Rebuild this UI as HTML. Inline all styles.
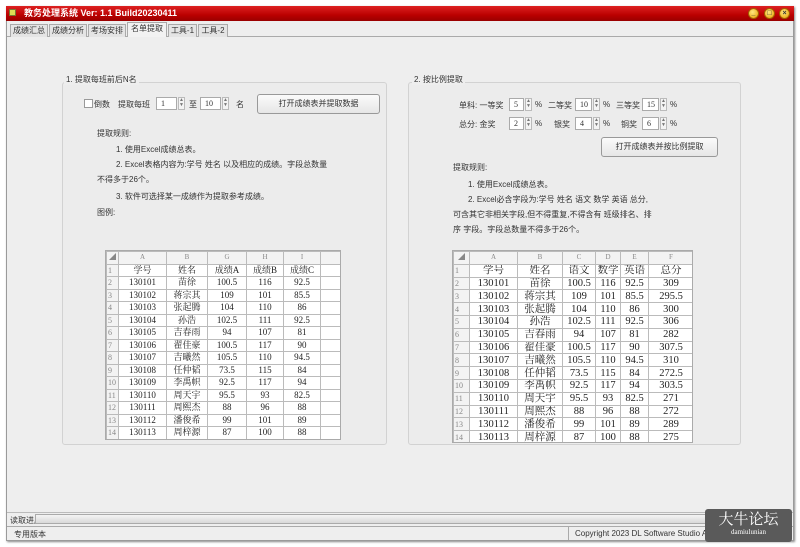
<!DOCTYPE html>
<html><head><meta charset="utf-8"><style>
*{margin:0;padding:0;box-sizing:border-box}
body{width:800px;height:547px;background:#fff;position:relative;overflow:hidden;font-family:"Liberation Sans","Noto Sans CJK SC",sans-serif;font-size:8px;color:#333}
.a{position:absolute;white-space:nowrap}
.win{left:6px;top:6px;width:788px;height:535px;background:#eeeeee;border:1px solid #9a9a9a;box-shadow:1px 1px 2px #888}
.title{left:6px;top:6px;width:788px;height:15px;background:linear-gradient(#d22 0%,#b00 60%,#900 100%);color:#fff;font-weight:bold;font-size:9px;line-height:15px;padding-left:18px}
.tb{top:8px;width:11px;height:11px;border-radius:50%;background:radial-gradient(circle at 40% 35%,#ffe680,#e8a000);border:1px solid #a06000;font-size:7px;line-height:9px;text-align:center;color:#333;font-weight:bold}
.tab{top:24px;height:13px;border:1px solid #aaa;border-bottom:none;background:#e4e4e4;font-size:8px;line-height:12px;text-align:center}
.grp{border:1px solid #d2d2d2;border-radius:3px;background:#ececec}
.inp{height:13px;background:#fff;border:1px solid #aaa;font-size:8px;line-height:11px;padding-left:4px;font-family:"Liberation Serif",serif}
.sp{width:7px;height:13px;border:1px solid #bbb;background:#f4f4f4;font-size:5px;line-height:5px;text-align:center;color:#777}
.btn{height:20px;border:1px solid #999;border-radius:3px;background:linear-gradient(#fbfbfb,#e6e6e6);text-align:center;line-height:18px;font-size:8px}
table{border-collapse:collapse;background:#fff;font-family:"Liberation Serif","Noto Serif CJK SC",serif;table-layout:fixed}
td{border:1px solid #bbb;text-align:center;padding:0;white-space:nowrap;color:#222;overflow:hidden}
.t1 td{height:12.5px;line-height:11px;font-size:9px}
.t2 td{height:12.8px;line-height:11px;font-size:10.5px}
td.h{color:#888;background:#f3f3f3;font-size:7px!important}
td.n{color:#888;background:#f3f3f3;text-align:left;font-size:8px!important;padding-left:1px}
</style></head><body>
<div class="a win"></div>
<div class="a title">教务处理系统 Ver: 1.1 Build20230411</div>
<div class="a" style="left:9px;top:9px;width:7px;height:7px;background:#dd5;border:1px solid #773"></div>
<div class="a tb" style="left:748px">_</div>
<div class="a tb" style="left:764px">□</div>
<div class="a tb" style="left:779px">×</div>
<div class="a" style="left:7px;top:36px;width:786px;height:1px;background:#aaa"></div>
<div class="a tab" style="left:10px;width:38px">成绩汇总</div>
<div class="a tab" style="left:49px;width:38px">成绩分析</div>
<div class="a tab" style="left:88px;width:38px">考场安排</div>
<div class="a tab" style="left:127px;width:40px;background:#f2f2f2;top:22px;height:15px">名单提取</div>
<div class="a tab" style="left:168px;width:29px">工具-1</div>
<div class="a tab" style="left:198px;width:30px">工具-2</div>

<div class="a grp" style="left:62px;top:82px;width:325px;height:363px"></div>
<div class="a" style="left:64px;top:74px;background:#eee;padding:0 2px">1. 提取每班前后N名</div>
<div class="a" style="left:84px;top:99px;width:9px;height:9px;border:1px solid #999;background:#fff"></div>
<div class="a" style="left:94px;top:99px">倒数</div>
<div class="a" style="left:118px;top:99px">提取每班</div>
<div class="a inp" style="left:156px;top:97px;width:21px">1</div>
<div class="a sp" style="left:178px;top:97px">▲<br>▼</div>
<div class="a" style="left:189px;top:99px">至</div>
<div class="a inp" style="left:200px;top:97px;width:21px">10</div>
<div class="a sp" style="left:222px;top:97px">▲<br>▼</div>
<div class="a" style="left:236px;top:99px">名</div>
<div class="a btn" style="left:257px;top:94px;width:123px">打开成绩表并提取数据</div>
<div class="a" style="left:97px;top:128px">提取规则:</div>
<div class="a" style="left:116px;top:144px">1. 使用Excel成绩总表。</div>
<div class="a" style="left:116px;top:159px">2. Excel表格内容为:学号 姓名 以及相应的成绩。字段总数量</div>
<div class="a" style="left:97px;top:174px">不得多于26个。</div>
<div class="a" style="left:116px;top:191px">3. 软件可选择某一成绩作为提取参考成绩。</div>
<div class="a" style="left:97px;top:207px">图例:</div>

<div class="a" style="left:105px;top:250px;width:236px;height:190px;border:1px solid #aaa;background:#f6f6f6;overflow:hidden">
<table class="t1" style="width:236px">
<colgroup><col style="width:12px"><col style="width:48px"><col style="width:41px"><col style="width:39px"><col style="width:37px"><col style="width:37px"><col></colgroup>
<tr><td class="h" style="height:10px">◢</td><td class="h" style="height:10px">A</td><td class="h">B</td><td class="h">G</td><td class="h">H</td><td class="h">I</td><td class="h"></td></tr>
<tr><td class="n">1</td><td>学号</td><td>姓名</td><td>成绩A</td><td>成绩B</td><td>成绩C</td><td></td></tr>
<tr><td class="n">2</td><td>130101</td><td>苗徐</td><td>100.5</td><td>116</td><td>92.5</td><td></td></tr>
<tr><td class="n">3</td><td>130102</td><td>蒋宗其</td><td>109</td><td>101</td><td>85.5</td><td></td></tr>
<tr><td class="n">4</td><td>130103</td><td>张起腾</td><td>104</td><td>110</td><td>86</td><td></td></tr>
<tr><td class="n">5</td><td>130104</td><td>孙浩</td><td>102.5</td><td>111</td><td>92.5</td><td></td></tr>
<tr><td class="n">6</td><td>130105</td><td>吉春雨</td><td>94</td><td>107</td><td>81</td><td></td></tr>
<tr><td class="n">7</td><td>130106</td><td>翟佳豪</td><td>100.5</td><td>117</td><td>90</td><td></td></tr>
<tr><td class="n">8</td><td>130107</td><td>吉曦然</td><td>105.5</td><td>110</td><td>94.5</td><td></td></tr>
<tr><td class="n">9</td><td>130108</td><td>任仲韬</td><td>73.5</td><td>115</td><td>84</td><td></td></tr>
<tr><td class="n">10</td><td>130109</td><td>李禹帜</td><td>92.5</td><td>117</td><td>94</td><td></td></tr>
<tr><td class="n">11</td><td>130110</td><td>周天宇</td><td>95.5</td><td>93</td><td>82.5</td><td></td></tr>
<tr><td class="n">12</td><td>130111</td><td>周熙杰</td><td>88</td><td>96</td><td>88</td><td></td></tr>
<tr><td class="n">13</td><td>130112</td><td>潘俊希</td><td>99</td><td>101</td><td>89</td><td></td></tr>
<tr><td class="n">14</td><td>130113</td><td>周梓源</td><td>87</td><td>100</td><td>88</td><td></td></tr>
</table></div>

<div class="a grp" style="left:408px;top:82px;width:333px;height:363px"></div>
<div class="a" style="left:412px;top:74px;background:#eee;padding:0 2px">2. 按比例提取</div>
<div class="a" style="left:459px;top:100px">单科: 一等奖</div>
<div class="a inp" style="left:509px;top:98px;width:15px">5</div><div class="a sp" style="left:525px;top:98px">▲<br>▼</div><div class="a" style="left:535px;top:100px">%</div>
<div class="a" style="left:548px;top:100px">二等奖</div>
<div class="a inp" style="left:575px;top:98px;width:17px">10</div><div class="a sp" style="left:593px;top:98px">▲<br>▼</div><div class="a" style="left:603px;top:100px">%</div>
<div class="a" style="left:616px;top:100px">三等奖</div>
<div class="a inp" style="left:642px;top:98px;width:17px">15</div><div class="a sp" style="left:660px;top:98px">▲<br>▼</div><div class="a" style="left:670px;top:100px">%</div>
<div class="a" style="left:459px;top:119px">总分: 金奖</div>
<div class="a inp" style="left:509px;top:117px;width:15px">2</div><div class="a sp" style="left:525px;top:117px">▲<br>▼</div><div class="a" style="left:535px;top:119px">%</div>
<div class="a" style="left:554px;top:119px">银奖</div>
<div class="a inp" style="left:575px;top:117px;width:17px">4</div><div class="a sp" style="left:593px;top:117px">▲<br>▼</div><div class="a" style="left:603px;top:119px">%</div>
<div class="a" style="left:621px;top:119px">铜奖</div>
<div class="a inp" style="left:642px;top:117px;width:17px">6</div><div class="a sp" style="left:660px;top:117px">▲<br>▼</div><div class="a" style="left:670px;top:119px">%</div>
<div class="a btn" style="left:601px;top:137px;width:117px">打开成绩表并按比例提取</div>
<div class="a" style="left:453px;top:162px">提取规则:</div>
<div class="a" style="left:468px;top:179px">1. 使用Excel成绩总表。</div>
<div class="a" style="left:468px;top:194px">2. Excel必含字段为:学号 姓名 语文 数学 英语 总分,</div>
<div class="a" style="left:453px;top:209px">可含其它非相关字段,但不得重复,不得含有 班级排名、排</div>
<div class="a" style="left:453px;top:224px">序 字段。字段总数量不得多于26个。</div>

<div class="a" style="left:452px;top:250px;width:241px;height:193px;border:1px solid #aaa;background:#fff;overflow:hidden">
<table class="t2" style="width:241px">
<colgroup><col style="width:16px"><col style="width:48px"><col style="width:45px"><col style="width:33px"><col style="width:25px"><col style="width:28px"><col></colgroup>
<tr><td class="h" style="height:11px">◢</td><td class="h" style="height:11px">A</td><td class="h">B</td><td class="h">C</td><td class="h">D</td><td class="h">E</td><td class="h">F</td></tr>
<tr><td class="n">1</td><td>学号</td><td>姓名</td><td>语文</td><td>数学</td><td>英语</td><td>总分</td></tr>
<tr><td class="n">2</td><td>130101</td><td>苗徐</td><td>100.5</td><td>116</td><td>92.5</td><td>309</td></tr>
<tr><td class="n">3</td><td>130102</td><td>蒋宗其</td><td>109</td><td>101</td><td>85.5</td><td>295.5</td></tr>
<tr><td class="n">4</td><td>130103</td><td>张起腾</td><td>104</td><td>110</td><td>86</td><td>300</td></tr>
<tr><td class="n">5</td><td>130104</td><td>孙浩</td><td>102.5</td><td>111</td><td>92.5</td><td>306</td></tr>
<tr><td class="n">6</td><td>130105</td><td>吉春雨</td><td>94</td><td>107</td><td>81</td><td>282</td></tr>
<tr><td class="n">7</td><td>130106</td><td>翟佳豪</td><td>100.5</td><td>117</td><td>90</td><td>307.5</td></tr>
<tr><td class="n">8</td><td>130107</td><td>吉曦然</td><td>105.5</td><td>110</td><td>94.5</td><td>310</td></tr>
<tr><td class="n">9</td><td>130108</td><td>任仲韬</td><td>73.5</td><td>115</td><td>84</td><td>272.5</td></tr>
<tr><td class="n">10</td><td>130109</td><td>李禹帜</td><td>92.5</td><td>117</td><td>94</td><td>303.5</td></tr>
<tr><td class="n">11</td><td>130110</td><td>周天宇</td><td>95.5</td><td>93</td><td>82.5</td><td>271</td></tr>
<tr><td class="n">12</td><td>130111</td><td>周熙杰</td><td>88</td><td>96</td><td>88</td><td>272</td></tr>
<tr><td class="n">13</td><td>130112</td><td>潘俊希</td><td>99</td><td>101</td><td>89</td><td>289</td></tr>
<tr><td class="n">14</td><td>130113</td><td>周梓源</td><td>87</td><td>100</td><td>88</td><td>275</td></tr>
</table></div>

<div class="a" style="left:7px;top:512px;width:786px;height:1px;background:#bbb"></div>
<div class="a" style="left:10px;top:515px">读取进度</div>
<div class="a" style="left:35px;top:514px;width:755px;height:10px;border:1px solid #aaa;background:linear-gradient(#f4f4f4,#d8d8d8)"></div>
<div class="a" style="left:7px;top:526px;width:786px;height:1px;background:#aaa"></div>
<div class="a" style="left:14px;top:529px">专用版本</div>
<div class="a" style="left:568px;top:527px;width:1px;height:13px;background:#aaa"></div>
<div class="a" style="left:575px;top:529px">Copyright 2023 DL Software Studio All</div>
<div class="a" style="left:705px;top:509px;width:87px;height:33px;background:#5a5a5a;border-radius:3px;color:#fff;text-align:center;font-family:'Noto Serif CJK SC',serif;font-size:15px;line-height:19px">大牛论坛<div style="font-size:7px;line-height:9px;font-family:'Liberation Serif',serif">damiulunian</div></div>
</body></html>
